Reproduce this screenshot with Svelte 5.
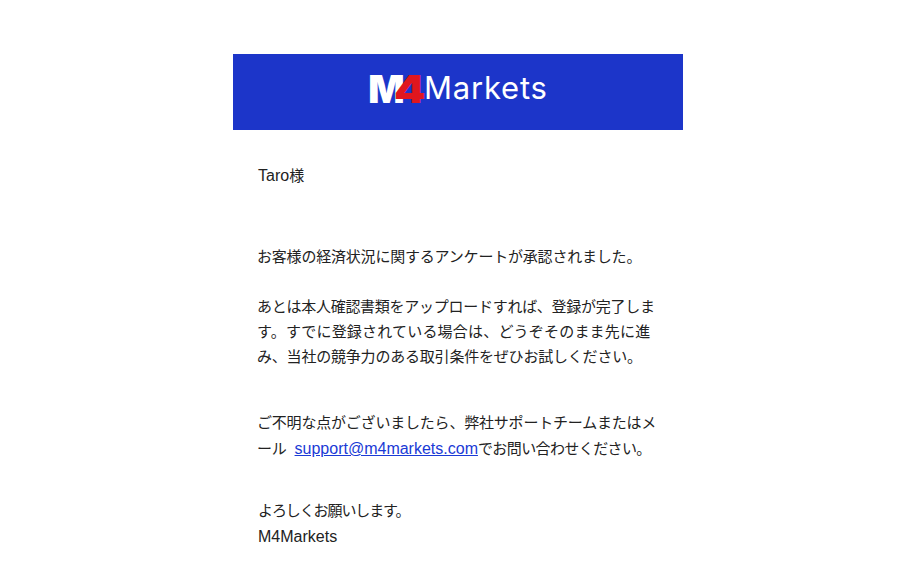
<script>
  const supportEmail = 'support@m4markets.com';
</script>

<div class="page">
  <div class="mail">
    <header class="banner">
      <div class="logo">
        <div class="mark">
          <span class="mark-m">M</span><span class="mark-4">4</span>
        </div>
        <span class="word">Markets</span>
      </div>
    </header>

    <main class="content">
      <p class="greeting"><span class="latin">Taro</span>様</p>

      <p class="first">お客様の経済状況に関するアンケートが承認されました。</p>

      <p class="steps">
        <span class="line-one">あとは本人確認書類をアップロードすれば、登録が完了しま</span><br /><span class="wide">す。すでに登録されている場合は、どうぞそのまま先に進</span><br />み、当社の競争力のある取引条件をぜひお試しください。
      </p>

      <p class="contact">
        ご不明な点がございましたら、弊社サポートチームまたはメ<br />ール&nbsp; <a class="latin" href="mailto:{supportEmail}">{supportEmail}</a><span class="snug">でお問い合わせください。</span>
      </p>

      <p class="closing"><span class="tight">よろしくお願いします。</span><br /><span class="latin">M4Markets</span></p>
    </main>
  </div>
</div>

<style>
  :global(body) {
    margin: 0;
    background: #fff;
  }

  .page {
    height: 564px;
    overflow: hidden;
    padding: 54px 0 0 233px;
    box-sizing: border-box;
  }

  .mail {
    width: 450px;
    font-family: "Liberation Sans", "Noto Sans CJK JP", sans-serif;
    font-size: 15px;
    letter-spacing: -0.2px;
    line-height: 25px;
    color: #222;
  }

  .latin {
    font-size: 16px;
    letter-spacing: 0;
  }

  .line-one {
    letter-spacing: -0.27px;
  }

  .wide {
    letter-spacing: 0.2px;
  }

  .snug {
    letter-spacing: -0.6px;
  }

  .tight {
    letter-spacing: -1.1px;
  }

  .banner {
    height: 76px;
    background: #1c35c9;
    display: flex;
    align-items: center;
    justify-content: center;
  }

  .logo {
    display: flex;
    align-items: center;
    color: #fff;
    line-height: 1;
    letter-spacing: 0;
    font-family: "Inter", sans-serif;
    margin-top: -9px;
  }

  .mark {
    display: flex;
    align-items: baseline;
    margin-top: 1px;
  }

  .mark-m {
    font-size: 38px;
    font-weight: 900;
  }

  .mark-4 {
    font-size: 39px;
    font-weight: 900;
    color: #e0161e;
    margin-left: -11px;
    margin-right: 3px;
    transform: scaleX(1.15);
    transform-origin: left;
  }

  .word {
    font-size: 31px;
    font-weight: 400;
    letter-spacing: 0.8px;
  }

  .content {
    padding: 33px 25px 0;
    white-space: nowrap;
  }

  p {
    margin: 0;
  }

  .first {
    margin-top: 56px;
    margin-left: -1px;
  }

  .steps {
    margin-top: 25px;
    margin-left: -1px;
  }

  .contact {
    margin-top: 41px;
    margin-left: -1px;
    line-height: 26px;
  }

  .closing {
    margin-top: 36px;
    line-height: 26px;
  }

  a {
    color: #1a3ad6;
    text-decoration: underline;
  }
</style>
